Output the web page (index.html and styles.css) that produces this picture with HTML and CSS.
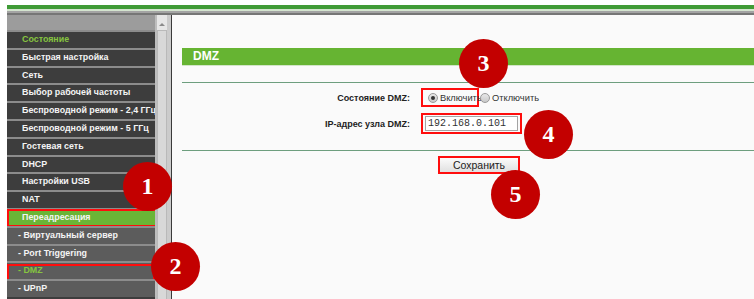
FILE: index.html
```html
<!DOCTYPE html>
<html lang="ru">
<head>
<meta charset="utf-8">
<title>DMZ</title>
<link rel="stylesheet" href="styles.css">
</head>
<body>
<div class="page">
  <div class="topbar">
    <div class="tb-green"></div>
    <div class="tb-light"></div>
    <div class="tb-gray"></div>
    <div class="tb-dark"></div>
  </div>
  <div class="main">
    <nav class="side">
      <div class="side-head"></div>
      <ul class="menu">
        <li class="item current">Состояние</li>
        <li class="item">Быстрая настройка</li>
        <li class="item">Сеть</li>
        <li class="item">Выбор рабочей частоты</li>
        <li class="item">Беспроводной режим - 2,4 ГГц</li>
        <li class="item">Беспроводной режим - 5 ГГц</li>
        <li class="item">Гостевая сеть</li>
        <li class="item">DHCP</li>
        <li class="item">Настройки USB</li>
        <li class="item">NAT</li>
        <li class="item active marked">Переадресация</li>
        <li class="item sub">- Виртуальный сервер</li>
        <li class="item sub">- Port Triggering</li>
        <li class="item sub current marked">- DMZ</li>
        <li class="item sub">- UPnP</li>
      </ul>
    </nav>
    <div class="scroll">
      <div class="scroll-top"><span class="arrow"></span></div>
      <div class="thumb"></div>
    </div>
    <div class="gutter"></div>
    <div class="divider"></div>
    <main class="content">
      <div class="title">DMZ</div>
      <div class="title-rule"></div>
      <div class="form">
        <div class="label">Состояние DMZ:</div>
        <div class="control">
          <span class="radio-box marked-box">
            <span class="radio checked"></span><span class="radio-text">Включить</span>
          </span>
          <span class="radio"></span><span class="radio-text">Отключить</span>
        </div>
        <div class="label">IP-адрес узла DMZ:</div>
        <div class="control">
          <span class="input-box marked-box"><input class="ip" type="text" value="192.168.0.101"></span>
        </div>
      </div>
      <div class="bottom-rule"></div>
      <div class="actions">
        <button class="save" type="button">Сохранить</button>
      </div>
    </main>
  </div>
  <div class="badge b1">1</div>
  <div class="badge b2">2</div>
  <div class="badge b3">3</div>
  <div class="badge b4">4</div>
  <div class="badge b5">5</div>
</div>
</body>
</html>
```
FILE: styles.css
```css
html, body {
  margin: 0;
  padding: 0;
  background: #ffffff;
  overflow: hidden;
}
.page {
  position: relative;
  width: 754px;
  height: 299px;
  box-sizing: border-box;
  padding: 5px 0 0 7px;
  font-family: "Liberation Sans", Arial, sans-serif;
}
.topbar div { height: 2px; }
.topbar .tb-green { height: 4px; background: #3f9b36; }
.topbar .tb-light { background: #d4e4cf; }
.topbar .tb-gray { background: #a3a3a3; }
.topbar .tb-dark { background: #767676; }

.main {
  display: flex;
  height: 284px;
}
.side {
  width: 148px;
  background: #3d3d3d;
  overflow: hidden;
}
.side-head {
  height: 15px;
  background: #9c9c9c;
}
.menu {
  list-style: none;
  margin: 0;
  padding: 0;
}
.item {
  position: relative;
  height: 17.8px;
  box-sizing: border-box;
  border-top: 2px solid #8c8c8c;
  padding-left: 15px;
  line-height: 15.8px;
  font-size: 8.9px;
  font-weight: bold;
  color: #f4f4f4;
  white-space: nowrap;
}
.item.sub {
  background: #5c5c5c;
  padding-left: 11px;
}
.item.current { color: #86c440; }
.item.active { background: #6ab536; }
.item.marked::after {
  content: "";
  position: absolute;
  left: 0;
  right: -2px;
  top: -1px;
  bottom: -1px;
  border: 2px solid #ff0d0d;
}
.item.sub.marked::after { right: 0; top: 1px; bottom: -2px; }

.scroll {
  width: 10px;
  border-left: 2px solid #bdbdbd;
  background: #d2d2d2;
  display: flex;
  flex-direction: column;
}
.scroll-top {
  height: 15px;
  background: #e6e6e6;
  display: flex;
  align-items: center;
  justify-content: center;
}
.arrow {
  width: 0;
  height: 0;
  border-left: 3px solid transparent;
  border-right: 3px solid transparent;
  border-bottom: 3px solid #8a8a8a;
  margin-top: 3px;
}
.thumb {
  flex: 1;
  background: #d8d8d8;
  border: 1px solid #b9b9b9;
  border-bottom: none;
}
.gutter {
  width: 4px;
  background: #cbcbcb;
}
.divider {
  width: 1px;
  background: #3a3a3a;
}
.content {
  flex: 1;
  background: #fafafa;
  padding: 33px 0 0 10px;
}
.title {
  height: 17px;
  background: #66b432;
  color: #ffffff;
  font-weight: bold;
  font-size: 12px;
  line-height: 17px;
  padding-left: 11px;
  border-bottom: 1px solid #d2e5c8;
}
.title-rule {
  margin-top: 16px;
  height: 1px;
  background: #6d9e7e;
}
.form {
  display: grid;
  grid-template-columns: 228px 1fr;
  column-gap: 11px;
  row-gap: 6px;
  margin-top: 5px;
  align-items: center;
}
.label {
  text-align: right;
  font-size: 9px;
  font-weight: bold;
  color: #222222;
}
.control {
  display: flex;
  align-items: center;
  color: #333333;
}
.marked-box {
  border: 2px solid #ff0d0d;
  box-sizing: border-box;
  display: inline-flex;
  align-items: center;
}
.radio-box {
  height: 19px;
  width: 58px;
  padding-left: 5px;
}
.radio {
  width: 8px;
  height: 8px;
  border-radius: 50%;
  border: 1px solid #9a9a9a;
  background: linear-gradient(#e8e8e8, #c9c9c9);
  position: relative;
  margin-left: 1px;
  flex: none;
}
.radio-box .radio { margin-left: 0; }
.radio.checked::after {
  content: "";
  position: absolute;
  left: 2px;
  top: 2px;
  width: 4px;
  height: 4px;
  border-radius: 50%;
  background: #333333;
}
.radio-text {
  margin-left: 2px;
  font-size: 9.3px;
  color: #333333;
}
.input-box {
  height: 21px;
  width: 101px;
  padding-left: 2px;
}
.ip {
  width: 93px;
  height: 15px;
  box-sizing: border-box;
  border: 1px solid #a4a4a4;
  background: #ffffff;
  font-family: "Liberation Mono", "Courier New", monospace;
  font-size: 10px;
  color: #333333;
  padding: 0 2px;
  margin: 0;
}
.bottom-rule {
  margin-top: 16px;
  height: 1px;
  background: #6d9e7e;
}
.actions {
  margin: 5px 0 0 256px;
  display: flex;
}
.save {
  width: 82px;
  height: 18px;
  margin: 0;
  padding: 0;
  border: 1px solid #a8a8a8;
  background: linear-gradient(#fdfdfd, #dedede);
  font-family: "Liberation Sans", Arial, sans-serif;
  font-size: 10.5px;
  color: #222222;
  outline: 2px solid #ff0d0d;
  outline-offset: -2px;
}

.badge {
  position: absolute;
  width: 49px;
  height: 49px;
  border-radius: 50%;
  background: radial-gradient(circle, #c30000 70%, #b00000 100%);
  color: #ffffff;
  font-family: "Liberation Serif", "Times New Roman", serif;
  font-weight: bold;
  font-size: 24px;
  line-height: 49px;
  text-align: center;
}
.b1 { left: 123px; top: 162px; }
.b2 { left: 151px; top: 242px; }
.b3 { left: 459px; top: 39px; }
.b4 { left: 524px; top: 110px; }
.b5 { left: 491px; top: 170px; }
```
